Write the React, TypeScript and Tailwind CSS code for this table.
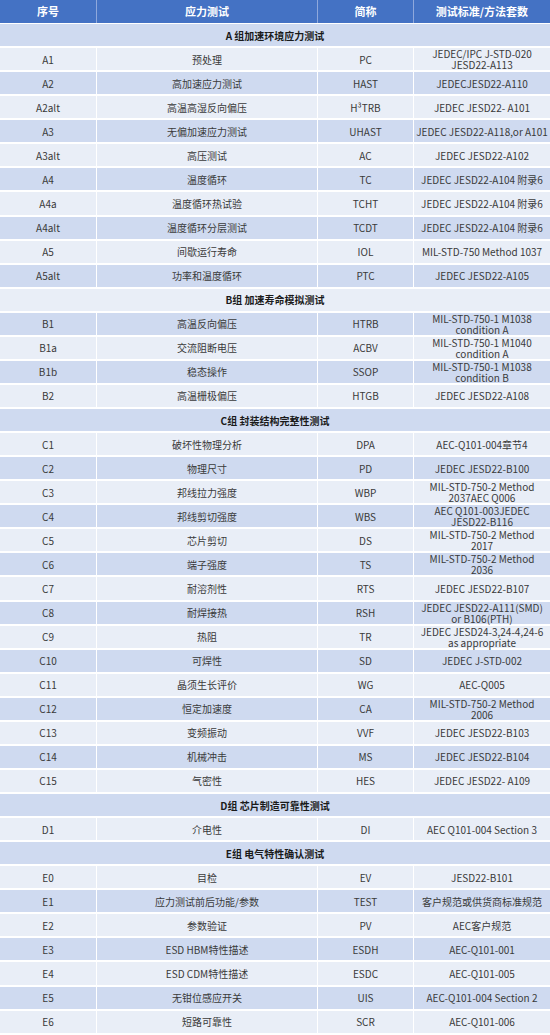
type Row = { id: string; name: string; abbr: string; std: string[] } | { section: string };

const rows: Row[] = [
  { section: "A 组加速环境应力测试" },
  { id: "A1", name: "预处理", abbr: "PC", std: ["JEDEC/IPC J-STD-020", "JESD22-A113"] },
  { id: "A2", name: "高加速应力测试", abbr: "HAST", std: ["JEDECJESD22-A110"] },
  { id: "A2alt", name: "高温高湿反向偏压", abbr: "H³TRB", std: ["JEDEC JESD22- A101"] },
  { id: "A3", name: "无偏加速应力测试", abbr: "UHAST", std: ["JEDEC JESD22-A118,or A101"] },
  { id: "A3alt", name: "高压测试", abbr: "AC", std: ["JEDEC JESD22-A102"] },
  { id: "A4", name: "温度循环", abbr: "TC", std: ["JEDEC JESD22-A104 附录6"] },
  { id: "A4a", name: "温度循环热试验", abbr: "TCHT", std: ["JEDEC JESD22-A104 附录6"] },
  { id: "A4alt", name: "温度循环分层测试", abbr: "TCDT", std: ["JEDEC JESD22-A104 附录6"] },
  { id: "A5", name: "间歇运行寿命", abbr: "IOL", std: ["MIL-STD-750 Method 1037"] },
  { id: "A5alt", name: "功率和温度循环", abbr: "PTC", std: ["JEDEC JESD22-A105"] },
  { section: "B组 加速寿命模拟测试" },
  { id: "B1", name: "高温反向偏压", abbr: "HTRB", std: ["MIL-STD-750-1 M1038", "condition A"] },
  { id: "B1a", name: "交流阻断电压", abbr: "ACBV", std: ["MIL-STD-750-1 M1040", "condition A"] },
  { id: "B1b", name: "稳态操作", abbr: "SSOP", std: ["MIL-STD-750-1 M1038", "condition B"] },
  { id: "B2", name: "高温栅极偏压", abbr: "HTGB", std: ["JEDEC JESD22-A108"] },
  { section: "C组 封装结构完整性测试" },
  { id: "C1", name: "破坏性物理分析", abbr: "DPA", std: ["AEC-Q101-004章节4"] },
  { id: "C2", name: "物理尺寸", abbr: "PD", std: ["JEDEC JESD22-B100"] },
  { id: "C3", name: "邦线拉力强度", abbr: "WBP", std: ["MIL-STD-750-2 Method", "2037AEC Q006"] },
  { id: "C4", name: "邦线剪切强度", abbr: "WBS", std: ["AEC Q101-003JEDEC", "JESD22-B116"] },
  { id: "C5", name: "芯片剪切", abbr: "DS", std: ["MIL-STD-750-2 Method", "2017"] },
  { id: "C6", name: "端子强度", abbr: "TS", std: ["MIL-STD-750-2 Method", "2036"] },
  { id: "C7", name: "耐溶剂性", abbr: "RTS", std: ["JEDEC JESD22-B107"] },
  { id: "C8", name: "耐焊接热", abbr: "RSH", std: ["JEDEC JESD22-A111(SMD)", "or B106(PTH)"] },
  { id: "C9", name: "热阻", abbr: "TR", std: ["JEDEC JESD24-3,24-4,24-6", "as appropriate"] },
  { id: "C10", name: "可焊性", abbr: "SD", std: ["JEDEC J-STD-002"] },
  { id: "C11", name: "晶须生长评价", abbr: "WG", std: ["AEC-Q005"] },
  { id: "C12", name: "恒定加速度", abbr: "CA", std: ["MIL-STD-750-2 Method", "2006"] },
  { id: "C13", name: "变频振动", abbr: "VVF", std: ["JEDEC JESD22-B103"] },
  { id: "C14", name: "机械冲击", abbr: "MS", std: ["JEDEC JESD22-B104"] },
  { id: "C15", name: "气密性", abbr: "HES", std: ["JEDEC JESD22- A109"] },
  { section: "D组 芯片制造可靠性测试" },
  { id: "D1", name: "介电性", abbr: "DI", std: ["AEC Q101-004 Section 3"] },
  { section: "E组 电气特性确认测试" },
  { id: "E0", name: "目检", abbr: "EV", std: ["JESD22-B101"] },
  { id: "E1", name: "应力测试前后功能/参数", abbr: "TEST", std: ["客户规范或供货商标准规范"] },
  { id: "E2", name: "参数验证", abbr: "PV", std: ["AEC客户规范"] },
  { id: "E3", name: "ESD HBM特性描述", abbr: "ESDH", std: ["AEC-Q101-001"] },
  { id: "E4", name: "ESD CDM特性描述", abbr: "ESDC", std: ["AEC-Q101-005"] },
  { id: "E5", name: "无钳位感应开关", abbr: "UIS", std: ["AEC-Q101-004 Section 2"] },
  { id: "E6", name: "短路可靠性", abbr: "SCR", std: ["AEC-Q101-006"] },
];

const cols = "grid grid-cols-[96px_220px_95px_1fr] gap-x-px";

export default function App() {
  return (
    <div
      className="w-[550px] bg-white text-[10px] text-[#3a3a3a]"
      style={{ fontFamily: '"Noto Sans CJK SC", sans-serif' }}
    >
      <div className={`${cols} h-[24px] border-b border-white bg-[#8fa8dc]`}>
        {["序号", "应力测试", "简称", "测试标准/方法套数"].map((h) => (
          <div key={h} className="flex items-center justify-center bg-[#4472c4] text-[11px] font-bold text-white">
            {h}
          </div>
        ))}
      </div>
      {rows.map((r, i) => {
        const bg = i % 2 === 0 ? "bg-[#cfdaf0]" : "bg-[#e9eef7]";
        if ("section" in r) {
          return (
            <div key={i} className={`flex h-[24.07px] items-center justify-center border-b-2 border-white font-bold text-[#1a1a1a] ${bg}`}>
              {r.section}
            </div>
          );
        }
        return (
          <div key={i} className={`${cols} h-[24.07px] border-b-2 border-white bg-white whitespace-nowrap`}>
            <div className={`flex items-center justify-center ${bg}`}>{r.id}</div>
            <div className={`flex items-center justify-center ${bg}`}>{r.name}</div>
            <div className={`flex items-center justify-center ${bg}`}>{r.abbr}</div>
            <div className={`flex flex-col items-center justify-center leading-[11px] ${bg}`}>
              {r.std.map((s) => (
                <span key={s}>{s}</span>
              ))}
            </div>
          </div>
        );
      })}
    </div>
  );
}
